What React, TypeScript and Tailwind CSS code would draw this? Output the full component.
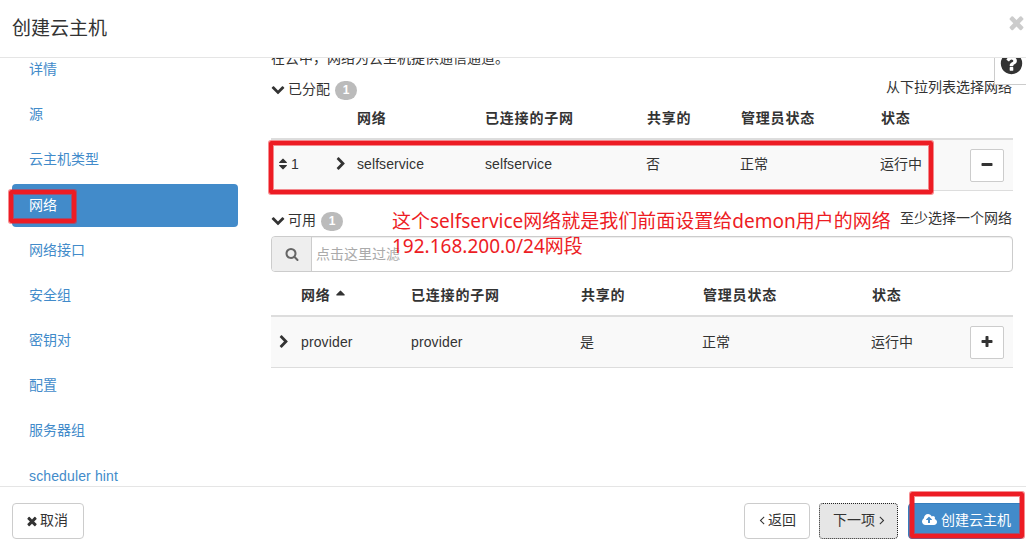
import type { ReactNode } from 'react';

type IconProps = { path: string; className?: string; viewBox?: string };

function Icon({ path, className = '', viewBox = '0 0 1792 1792' }: IconProps) {
  return (
    <svg viewBox={viewBox} className={`shrink-0 ${className}`} fill="currentColor" aria-hidden="true">
      <path d={path} />
    </svg>
  );
}

const icons = {
  times:
    'M1490 1322q0 40-28 68l-136 136q-28 28-68 28t-68-28l-294-294-294 294q-28 28-68 28t-68-28l-136-136q-28-28-28-68t28-68l294-294-294-294q-28-28-28-68t28-68l136-136q28-28 68-28t68 28l294 294 294-294q28-28 68-28t68 28l136 136q28 28 28 68t-28 68l-294 294 294 294q28 28 28 68z',
  right:
    'M1363 877l-742 742q-19 19-45 19t-45-19l-166-166q-19-19-19-45t19-45l531-531-531-531q-19-19-19-45t19-45l166-166q19-19 45-19t45 19l742 742q19 19 19 45t-19 45z',
  down:
    'M1683 808l-742 741q-19 19-45 19t-45-19l-742-741q-19-19-19-45.5t19-45.5l166-165q19-19 45-19t45 19l531 531 531-531q19-19 45-19t45 19l166 165q19 19 19 45.5t-19 45.5z',
  angleLeft:
    'M1203 544q0 13-10 23l-393 393 393 393q10 10 10 23t-10 23l-50 50q-10 10-23 10t-23-10l-466-466q-10-10-10-23t10-23l466-466q10-10 23-10t23 10l50 50q10 10 10 23z',
  angleRight:
    'M1171 960q0 13-10 23l-466 466q-10 10-23 10t-23-10l-50-50q-10-10-10-23t10-23l393-393-393-393q-10-10-10-23t10-23l50-50q10-10 23-10t23 10l466 466q10 10 10 23z',
  cloudUpload:
    'M1216 864q0-14-9-23l-352-352q-9-9-23-9t-23 9l-351 351q-10 12-10 24 0 14 9 23t23 9h224v352q0 13 9.5 22.5t22.5 9.5h192q13 0 22.5-9.5t9.5-22.5v-352h224q13 0 22.5-9.5t9.5-22.5zm640 288q0 159-112.5 271.5t-271.5 112.5h-1088q-185 0-316.5-131.5t-131.5-316.5q0-130 70-240t188-165q-2-30-2-43 0-212 150-362t362-150q156 0 285.5 87t188.5 231q71-62 166-62 106 0 181 75t75 181q0 76-41 138 130 31 213.5 135.5t83.5 238.5z',
  search:
    'M1216 832q0-185-131.5-316.5t-316.5-131.5-316.5 131.5-131.5 316.5 131.5 316.5 316.5 131.5 316.5-131.5 131.5-316.5zm512 832q0 52-38 90t-90 38q-54 0-90-38l-343-342q-179 124-399 124-143 0-273.5-55.5t-225-150-150-225-55.5-273.5 55.5-273.5 150-225 225-150 273.5-55.5 273.5 55.5 225 150 150 225 55.5 273.5q0 220-124 399l343 343q37 37 37 90z',
  question:
    'M1024 1376v-192q0-14-9-23t-23-9h-192q-14 0-23 9t-9 23v192q0 14 9 23t23 9h192q14 0 23-9t9-23zm256-672q0-88-55.5-163t-138.5-116-170-41q-243 0-371 213-15 24 8 42l132 100q7 6 19 6 16 0 25-12 53-68 86-92 34-24 86-24 48 0 85.5 26t37.5 59q0 38-20 61t-68 45q-63 28-115.5 86.5t-52.5 125.5v36q0 14 9 23t23 9h192q14 0 23-9t9-23q0-19 21.5-49.5t54.5-49.5q32-18 49-28.5t46-35 44.5-48 28-60.5 12.5-81zm384 192q0 209-103 385.5t-279.5 279.5-385.5 103-385.5-103-279.5-279.5-103-385.5 103-385.5 279.5-279.5 385.5-103 385.5 103 279.5 279.5 103 385.5z',
  plus:
    'M1600 736v192q0 40-28 68t-68 28h-416v416q0 40-28 68t-68 28h-192q-40 0-68-28t-28-68v-416h-416q-40 0-68-28t-28-68v-192q0-40 28-68t68-28h416v-416q0-40 28-68t68-28h192q40 0 68 28t28 68v416h416q40 0 68 28t28 68z',
  minus:
    'M1600 736v192q0 40-28 68t-68 28h-1216q-40 0-68-28t-28-68v-192q0-40 28-68t68-28h1216q40 0 68 28t28 68z',
  sort:
    'M1408 1088q0 26-19 45l-448 448q-19 19-45 19t-45-19l-448-448q-19-19-19-45t19-45 45-19h896q26 0 45 19t19 45zm0-384q0 26-19 45t-45 19h-896q-26 0-45-19t-19-45 19-45l448-448q19-19 45-19t45 19l448 448q19 19 19 45z',
  sortUp:
    'M1408 704q0 26-19 45t-45 19h-896q-26 0-45-19t-19-45 19-45l448-448q19-19 45-19t45 19l448 448q19 19 19 45z',
};

const steps = ['详情', '源', '云主机类型', '网络', '网络接口', '安全组', '密钥对', '配置', '服务器组', 'scheduler hint'];

const allocatedCols = 'grid grid-cols-[86px_128px_162px_94px_140px_89px_43px]';
const availableCols = 'grid grid-cols-[30px_110px_170px_122px_169px_98px_43px]';
const highlight =
  'pointer-events-none absolute rounded-[2px] border-4 border-[#ed1c24] shadow-[0_0_0_1px_rgba(237,28,36,0.5),inset_0_0_0_1px_rgba(237,28,36,0.5)]';

function Badge({ children }: { children: ReactNode }) {
  return (
    <span className="ml-[5px] flex h-[19px] w-[22px] items-center justify-center rounded-full bg-[#bbb] text-xs font-bold text-white">
      {children}
    </span>
  );
}

function SquareButton({ path }: { path: string }) {
  return (
    <button className="flex h-[33px] w-[34px] items-center justify-center rounded-[2px] border border-[#ccc] bg-white">
      <Icon path={path} className="size-[14px]" />
    </button>
  );
}

export default function App() {
  return (
    <div className="relative flex h-[551px] w-[1026px] flex-col overflow-hidden bg-white font-['Liberation_Sans','Noto_Sans_CJK_SC',sans-serif] text-[14px] leading-5 text-[#333]">
      <header className="flex h-[58px] shrink-0 justify-between border-b border-[#e5e5e5] pl-3">
        <h4 className="pt-4 text-[19px] leading-[26px]">创建云主机</h4>
        <Icon path={icons.times} className="mt-3 mr-[-1px] size-[21px] text-[#ccc]" />
      </header>

      <div className="relative flex h-[428px] shrink-0 overflow-hidden">
        <nav className="mt-[-9.4px] ml-3 w-[226px] shrink-0">
          {steps.map((step) => (
            <div
              key={step}
              className={
                step === '网络'
                  ? 'mb-[2.15px] flex h-[43px] items-center rounded-[4px] bg-[#428bca] pb-[2px] pl-[17px] text-white'
                  : step === 'scheduler hint'
                    ? 'mb-[2.15px] flex h-[43px] items-center pl-[17px] tracking-[0.13px] text-[#428bca]'
                    : 'mb-[2.15px] flex h-[43px] items-center pb-[2px] pl-[17px] text-[#428bca]'
              }
            >
              {step}
            </div>
          ))}
        </nav>

        <main className="mt-[-10px] ml-[33px] flex w-[742px] shrink-0 flex-col">
          <p className="h-5">在云中，网络为云主机提供通信通道。</p>

          <section>
            <div className="flex h-[38px] justify-between">
              <div className="flex h-11 items-center">
                <Icon path={icons.down} className="mt-[-2px] mr-[3px] size-[14px]" />
                <span className="pb-[2px]">已分配</span>
                <Badge>1</Badge>
              </div>
              <span className="mr-[1px] pt-[9px]">从下拉列表选择网络</span>
            </div>
            <div className={`${allocatedCols} h-[34px] items-center border-b-2 border-[#ddd] pb-[8px] font-bold tracking-[0.8px]`}>
              <span />
              <span>网络</span>
              <span>已连接的子网</span>
              <span>共享的</span>
              <span>管理员状态</span>
              <span>状态</span>
            </div>
            <div className={`${allocatedCols} h-[51px] items-center border-b border-[#ddd] bg-[#f9f9f9]`}>
              <div className="flex items-center pb-[2px]">
                <Icon path={icons.sort} className="ml-[5px] size-[14px]" />
                <span className="ml-[1px]">1</span>
                <Icon path={icons.right} className="ml-[35px] size-[14px]" />
              </div>
              <span className="pb-[2px] tracking-[0.08px]">selfservice</span>
              <span className="pb-[2px] tracking-[0.08px]">selfservice</span>
              <span className="ml-[-1px] pb-[2px]">否</span>
              <span className="ml-[-1px] pb-[2px]">正常</span>
              <span className="ml-[-1px] pb-[2px]">运行中</span>
              <SquareButton path={icons.minus} />
            </div>
          </section>

          <section className="mt-[17px]">
            <div className="flex h-[28px] justify-between">
              <div className="flex h-[26px] items-center">
                <Icon path={icons.down} className="mt-[-2px] mr-[3px] size-[14px]" />
                <span className="pb-[3px]">可用</span>
                <Badge>1</Badge>
              </div>
              <span className="mr-[1px]">至少选择一个网络</span>
            </div>
            <div className="flex h-9 overflow-hidden rounded-[4px] border border-[#ccc] shadow-[inset_0_1px_1px_rgba(0,0,0,0.075)]">
              <span className="flex w-10 items-center justify-center border-r border-[#ccc] bg-[#eee] text-[#666]">
                <Icon path={icons.search} className="size-[14px]" />
              </span>
              <span className="pt-[7px] pl-1 text-[#aaa]">点击这里过滤</span>
            </div>
            <div className={`${availableCols} h-[45px] items-center border-b-2 border-[#ddd] pt-[3px] font-bold tracking-[0.8px]`}>
              <span />
              <span className="flex items-center">
                网络
                <Icon path={icons.sortUp} className="mt-[3px] ml-[2px] size-[15px]" />
              </span>
              <span>已连接的子网</span>
              <span>共享的</span>
              <span>管理员状态</span>
              <span>状态</span>
            </div>
            <div className={`${availableCols} h-[51px] items-center border-b border-[#ddd] bg-[#f9f9f9]`}>
              <Icon path={icons.right} className="ml-[6px] size-[14px]" />
              <span className="tracking-[0.13px]">provider</span>
              <span className="tracking-[0.13px]">provider</span>
              <span className="ml-[-1px]">是</span>
              <span className="ml-[-1px]">正常</span>
              <span className="ml-[-1px]">运行中</span>
              <SquareButton path={icons.plus} />
            </div>
          </section>
        </main>

        <button className="absolute top-[-10px] right-[-6px] flex h-[37px] w-[38px] items-start border border-[#ccc] bg-white pt-[2px] pl-[4px]">
          <Icon path={icons.question} className="size-[25px]" />
        </button>
      </div>

      <footer className="flex flex-1 border-t border-[#e5e5e5] pt-4 pl-3">
        <button className="flex h-9 w-[72px] items-center rounded-[4px] border border-[#ccc] bg-white pb-[2px] pl-[12px]">
          <Icon path={icons.times} className="mt-[1px] mr-[1px] size-[14px]" />
          取消
        </button>
        <button className="ml-[660px] flex h-9 w-[66px] items-center rounded-[4px] border border-[#ccc] bg-white pb-[2px] pl-[10px]">
          <Icon path={icons.angleLeft} className="mr-[-1px] size-[14px]" />
          返回
        </button>
        <button className="ml-[9px] flex h-9 w-[79px] items-center rounded-[4px] border border-dotted border-[#222] bg-[#e6e6e6] pb-[2px] pl-[13px]">
          下一项
          <Icon path={icons.angleRight} className="size-[14px]" />
        </button>
        <button className="ml-[10px] flex h-9 w-[116px] items-center rounded-[4px] border border-[#357ebd] bg-[#428bca] pb-[2px] pl-[13px] text-white">
          <Icon path={icons.cloudUpload} viewBox="-64 0 1920 1792" className="mr-1 h-[14px] w-[15px]" />
          创建云主机
        </button>
      </footer>

      <div className={`${highlight} top-[190px] left-[9px] h-[33px] w-[67px]`} />
      <div className={`${highlight} top-[141px] left-[269px] h-[53px] w-[664px]`} />
      <div className={`${highlight} top-[492px] left-[910px] h-[46px] w-[114px]`} />
      <div className="pointer-events-none absolute top-[209px] left-[392px] font-['Noto_Sans','Noto_Sans_CJK_SC',sans-serif] text-[19px] leading-[25px] whitespace-nowrap text-[#ed1c24]">
        <div>这个selfservice网络就是我们前面设置给demon用户的网络</div>
        <div>192.168.200.0/24网段</div>
      </div>
    </div>
  );
}
